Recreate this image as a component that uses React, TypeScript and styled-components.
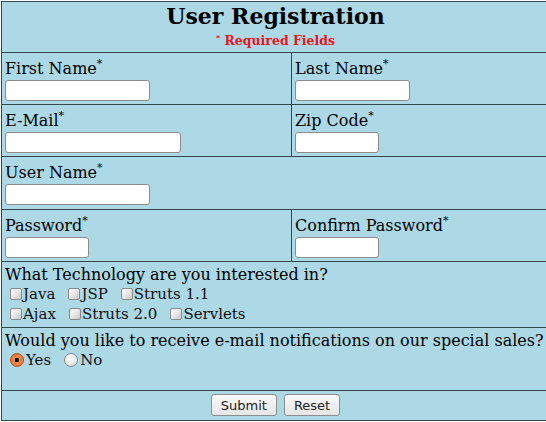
import React from 'react';
import styled, { createGlobalStyle } from 'styled-components';

const GlobalStyle = createGlobalStyle`
  html, body {
    margin: 0;
    padding: 0;
    background: #ffffff;
    overflow: hidden;
  }
`;

const LINE = '#34474f';

const Page = styled.div`
  padding: 1px 0 0 1px;
`;

const Form = styled.form`
  display: grid;
  grid-template-columns: 290px 258px;
  width: 548px;
  background: #add8e6;
  border-top: 1px solid ${LINE};
  border-left: 1px solid ${LINE};
  font-family: 'DejaVu Serif', serif;
  color: #000;
`;

const Cell = styled.div<{ $span?: boolean; $h: number; $center?: boolean }>`
  grid-column: ${(p) => (p.$span ? '1 / span 2' : 'auto')};
  height: ${(p) => p.$h}px;
  box-sizing: border-box;
  padding: 3px 3px 0 3px;
  border-right: 1px solid ${LINE};
  border-bottom: 1px solid ${LINE};
  text-align: ${(p) => (p.$center ? 'center' : 'left')};
`;

const ButtonCell = styled(Cell)`
  display: flex;
  justify-content: center;
  align-items: flex-start;
  gap: 7px;
  padding-top: 3px;
`;

const Title = styled.div`
  font-size: 22px;
  font-weight: bold;
  line-height: 26px;
  margin-top: -2px;
`;

const Required = styled.div`
  color: #e8141e;
  font-size: 12.5px;
  font-weight: bold;
  line-height: 16px;
  margin-top: 0;

  sup {
    font-size: 8px;
  }
`;

const Label = styled.label`
  display: block;
  font-size: 16px;
  line-height: 18px;
  margin-top: 4px;

  sup {
    font-size: 11px;
    vertical-align: 7px;
    line-height: 0;
  }
`;

const TextInput = styled.input<{ $w: number }>`
  display: block;
  box-sizing: border-box;
  width: ${(p) => p.$w}px;
  height: 21px;
  margin: 2px 0 0 0;
  padding: 1px 3px;
  border: 1px solid #8c8c8c;
  border-radius: 3px;
  background: #fff;
  font-family: 'DejaVu Sans', sans-serif;
  font-size: 13px;
`;

const Question = styled.div`
  font-size: 16px;
  line-height: 18px;
  margin-top: 1px;
  white-space: nowrap;
`;

const OptionRow = styled.div`
  display: flex;
  align-items: center;
  height: 20px;
  padding-left: 5px;
  font-family: 'DejaVu Serif', serif;
  font-size: 15px;
  color: #111;
`;

const Option = styled.label`
  display: inline-flex;
  align-items: center;
  margin-right: 13px;
`;

const Check = styled.input`
  appearance: none;
  width: 12px;
  height: 12px;
  margin: 0 1px 0 0;
  border: 1px solid #8a8a8a;
  border-radius: 2px;
  background: linear-gradient(135deg, #ffffff 0%, #e4e4e4 55%, #c8c8c8 100%);
`;

const Radio = styled.input`
  appearance: none;
  width: 14px;
  height: 14px;
  margin: 0 2px 0 0;
  border: 1px solid #8a8a8a;
  border-radius: 50%;
  background: radial-gradient(circle at 40% 35%, #ffffff 0%, #e8e8e8 60%, #c4c4c4 100%);

  &:checked {
    border-color: #b14d1c;
    background: radial-gradient(circle, #000 0 2px, #f28a4e 2.5px, #e46a2e 100%);
  }
`;

const Button = styled.button`
  height: 22px;
  margin: 0;
  padding: 0 9px;
  font-family: 'DejaVu Sans', sans-serif;
  font-size: 13px;
  color: #222;
  border: 1px solid #8e8e8e;
  border-radius: 3px;
  background: linear-gradient(#fafafa, #e6e6e6);
`;

const Ast = () => <sup>*</sup>;

export default function App() {
  return (
    <Page>
      <GlobalStyle />
      <Form onSubmit={(e) => e.preventDefault()}>
        <Cell $span $center $h={51}>
          <Title>User Registration</Title>
          <Required>
            <sup>*</sup> Required Fields
          </Required>
        </Cell>

        <Cell $h={52}>
          <Label>
            First Name<Ast />
          </Label>
          <TextInput $w={145} />
        </Cell>
        <Cell $h={52}>
          <Label>
            Last Name<Ast />
          </Label>
          <TextInput $w={115} />
        </Cell>

        <Cell $h={52}>
          <Label>
            E-Mail<Ast />
          </Label>
          <TextInput $w={176} />
        </Cell>
        <Cell $h={52}>
          <Label>
            Zip Code<Ast />
          </Label>
          <TextInput $w={84} />
        </Cell>

        <Cell $span $h={53}>
          <Label>
            User Name<Ast />
          </Label>
          <TextInput $w={145} />
        </Cell>

        <Cell $h={52}>
          <Label>
            Password<Ast />
          </Label>
          <TextInput type="password" $w={84} />
        </Cell>
        <Cell $h={52}>
          <Label>
            Confirm Password<Ast />
          </Label>
          <TextInput type="password" $w={84} />
        </Cell>

        <Cell $span $h={66}>
          <Question>What Technology are you interested in?</Question>
          <OptionRow>
            <Option>
              <Check type="checkbox" />
              Java
            </Option>
            <Option>
              <Check type="checkbox" />
              JSP
            </Option>
            <Option>
              <Check type="checkbox" />
              Struts 1.1
            </Option>
          </OptionRow>
          <OptionRow>
            <Option>
              <Check type="checkbox" />
              Ajax
            </Option>
            <Option>
              <Check type="checkbox" />
              Struts 2.0
            </Option>
            <Option>
              <Check type="checkbox" />
              Servlets
            </Option>
          </OptionRow>
        </Cell>

        <Cell $span $h={63}>
          <Question>Would you like to receive e-mail notifications on our special sales?</Question>
          <OptionRow>
            <Option>
              <Radio type="radio" name="notify" defaultChecked />
              Yes
            </Option>
            <Option>
              <Radio type="radio" name="notify" />
              No
            </Option>
          </OptionRow>
        </Cell>

        <ButtonCell $span $h={30}>
          <Button type="submit">Submit</Button>
          <Button type="reset">Reset</Button>
        </ButtonCell>
      </Form>
    </Page>
  );
}
